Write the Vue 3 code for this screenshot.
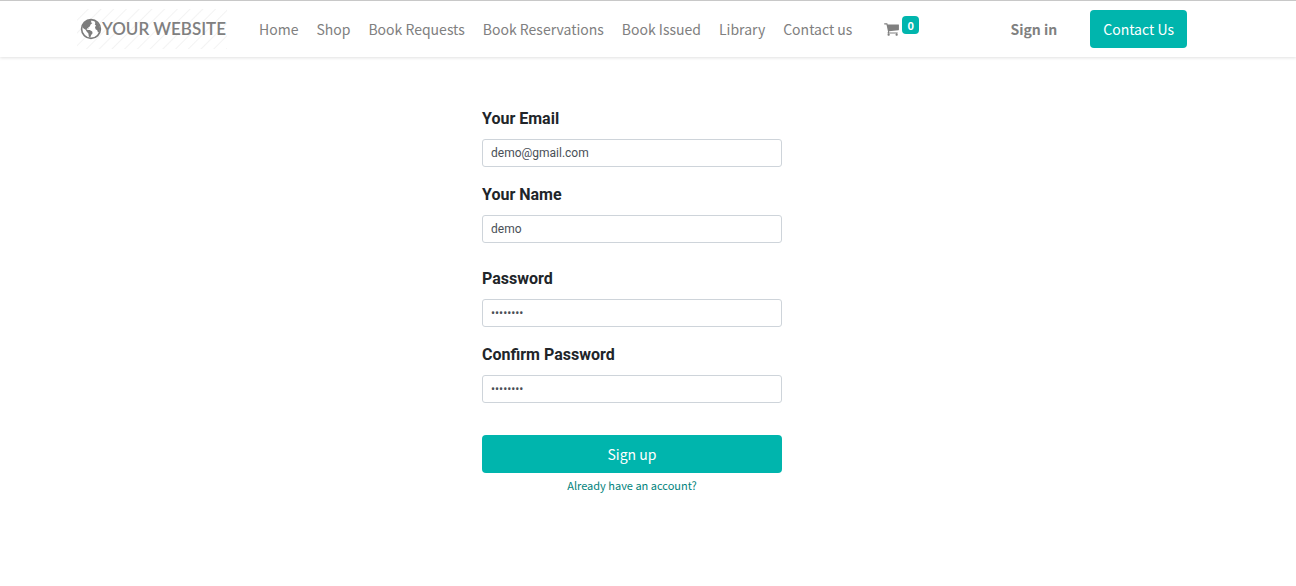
<script setup>
import { ref } from 'vue'

const links = ['Home', 'Shop', 'Book Requests', 'Book Reservations', 'Book Issued', 'Library', 'Contact us']
const cartCount = ref(0)
const form = ref({ email: 'demo@gmail.com', name: 'demo', password: 'demodemo', confirm: 'demodemo' })
const fields = [
  { key: 'email', label: 'Your Email', type: 'text' },
  { key: 'name', label: 'Your Name', type: 'text' },
  { key: 'password', label: 'Password', type: 'password', spaced: true },
  { key: 'confirm', label: 'Confirm Password', type: 'password' },
]
</script>

<template>
  <div class="page">
    <header class="header">
      <div class="container bar">
        <a class="logo" href="#" aria-label="Your Website">
          <svg class="globe" viewBox="0 0 22 22" aria-hidden="true">
            <circle cx="11" cy="11" r="9.4" fill="#fff" stroke="#7c7c7c" stroke-width="1.6" />
            <path
              fill="#7c7c7c"
              d="M3 6.5 6 3.2 9.5 1.8 11.6 2.6 10.8 4.2 12.4 5 10.6 6.6 9.8 8.4 8.2 9.2 8.8 10.4 7.2 10.2 6.6 11.4 8 12 9.8 12 12.2 13.4 12.6 15.2 11.2 17 10.2 19.8 8.8 18.4 8.4 15.4 6.6 13.6 5.6 11.8 3.6 10.6 2.4 9zM14.4 3.2 16.8 4.2 18.8 6.8 20.2 10.6 19.2 14 18 14.6 17.2 12.2 15.6 11.2 15 9.2 16 7.6 14.8 6.4 15.4 5z"
            />
          </svg>
          <span>YOUR WEBSITE</span>
        </a>
        <nav class="nav">
          <a v-for="link in links" :key="link" href="#">{{ link }}</a>
        </nav>
        <a class="cart" href="#" aria-label="Cart">
          <svg viewBox="0 0 1664 1792" aria-hidden="true">
            <path
              fill="currentColor"
              d="M640 1536q0 52-38 90t-90 38-90-38-38-90 38-90 90-38 90 38 38 90zm896 0q0 52-38 90t-90 38-90-38-38-90 38-90 90-38 90 38 38 90zm128-1088v512q0 24-16.5 42.5t-40.5 21.5l-1044 122q13 60 13 70 0 16-24 64h920q26 0 45 19t19 45-19 45-45 19h-1024q-26 0-45-19t-19-45q0-11 8-31.5t16-36 21.5-40 15.5-29.5l-177-823h-204q-26 0-45-19t-19-45 19-45 45-19h256q16 0 28.5 6.5t19.5 15.5 13 24.5 8 26 5.5 29.5 4.5 26h1201q26 0 45 19t19 45z"
            />
          </svg>
          <span class="badge">{{ cartCount }}</span>
        </a>
        <a class="signin" href="#">Sign in</a>
        <a class="button" href="#">Contact Us</a>
      </div>
    </header>
    <main class="container main">
      <form class="form" @submit.prevent>
        <div v-for="f in fields" :key="f.key" class="field" :class="{ spaced: f.spaced }">
          <label :for="f.key">{{ f.label }}</label>
          <input :id="f.key" v-model="form[f.key]" :type="f.type" />
        </div>
        <button class="button submit" type="submit">Sign up</button>
        <a class="existing" href="#">Already have an account?</a>
      </form>
    </main>
  </div>
</template>

<style>
body {
  margin: 0;
  background: #fff;
}
</style>

<style scoped>
* {
  box-sizing: border-box;
}
.page {
  font: 14px/24px "Source Sans Pro", "Noto Sans CJK SC", sans-serif;
  color: #212529;
}
a {
  color: inherit;
  text-decoration: none;
}
.header {
  padding: 8px 32px 8px 0;
  border-top: 1px solid #c8c8c8;
  box-shadow: 0 1px 3px rgba(0, 0, 0, 0.12);
  color: #808080;
}
.container {
  max-width: 1140px;
  margin: 0 auto;
  padding: 0 15px;
}
.bar {
  display: flex;
  align-items: center;
  white-space: nowrap;
}
.logo {
  display: flex;
  align-items: center;
  width: 150px;
  height: 40px;
  padding-left: 3px;
  margin-right: 32px;
  font: 17px/24px Lato, sans-serif;
  font-weight: 600;
  color: #808080;
  background: repeating-linear-gradient(135deg, #fff 0 7px, #f3f3f3 8px, #fff 9px);
}
.globe {
  flex: none;
  width: 22px;
  height: 22px;
}
.nav {
  display: flex;
  gap: 18px;
}
.cart {
  display: flex;
  align-items: center;
  gap: 3px;
  margin-left: 32px;
}
.cart svg {
  width: 15px;
  height: 16px;
}
.badge {
  padding: 0 5px;
  margin-bottom: 8px;
  border-radius: 4px;
  background: #00b5ad;
  color: #fff;
  font-size: 11px;
  font-weight: 700;
  line-height: 18px;
}
.signin {
  margin-left: auto;
  margin-right: 33px;
  font-weight: 700;
}
.button {
  padding: 7px 13px;
  border: 0;
  border-radius: 4px;
  background: #00b5ad;
  color: #fff;
  font: inherit;
}
.main {
  padding: 50px 47px 50px 15px;
}
.form {
  display: flex;
  flex-direction: column;
  max-width: 300px;
  margin: 0 auto;
}
.field {
  display: flex;
  flex-direction: column;
  gap: 8px;
  margin-bottom: 16px;
  font-family: Roboto, sans-serif;
}
.spaced {
  margin-top: 8px;
}
label {
  font-size: 16px;
  font-weight: 700;
}
input {
  width: 100%;
  height: 28px;
  padding: 4px 8px;
  border: 1px solid #ced4da;
  border-radius: 3px;
  background: #fff;
  color: #495057;
  font: 12px/18px Roboto, sans-serif;
}
.submit {
  margin-top: 16px;
}
.existing {
  align-self: center;
  margin-top: 3px;
  color: #00827c;
  font-size: 11px;
  line-height: 18px;
}
</style>
